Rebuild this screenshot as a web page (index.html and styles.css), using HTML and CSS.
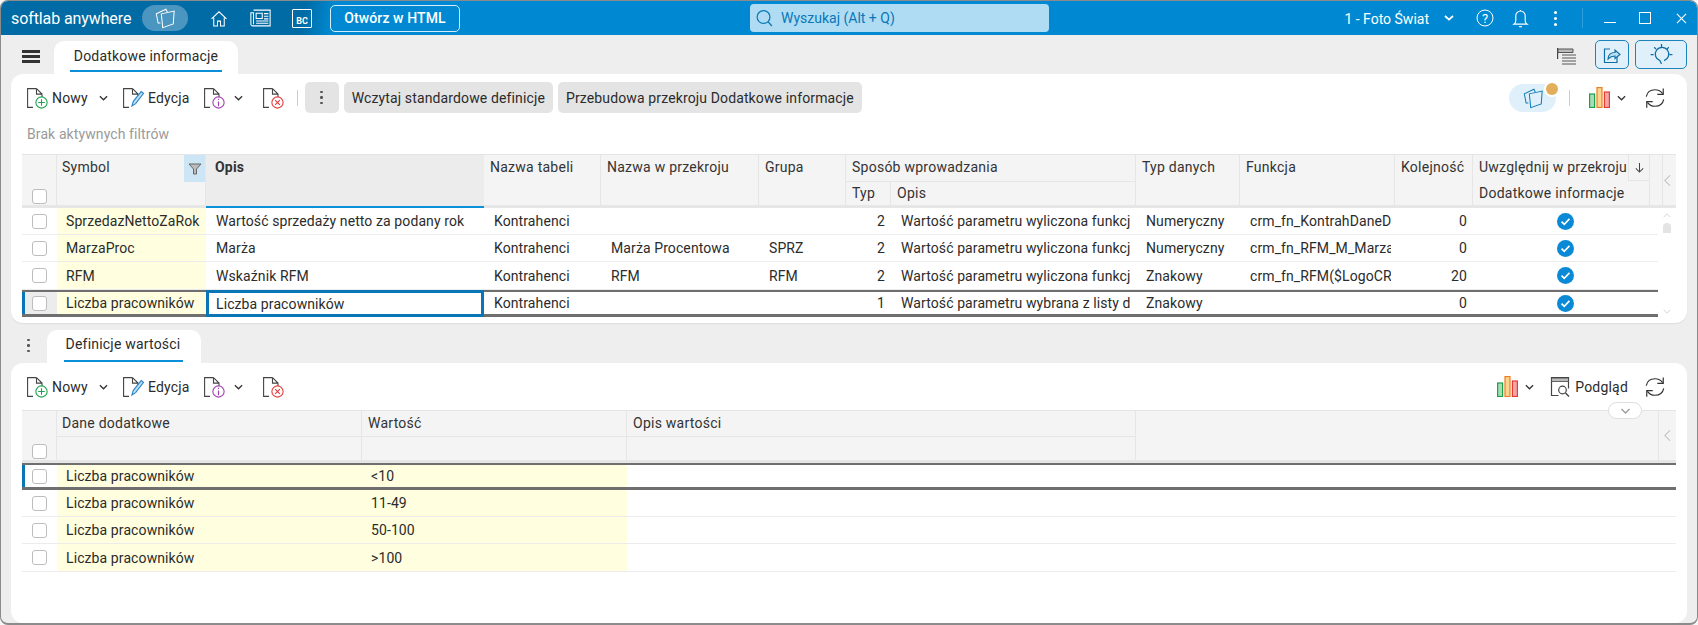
FILE: index.html
```html
<!DOCTYPE html>
<html lang="pl">
<head>
<meta charset="utf-8">
<title>softlab anywhere</title>
<link rel="stylesheet" href="styles.css">
</head>
<body>
<svg class="defs" width="0" height="0">
  <defs>
    <symbol id="page" viewBox="0 0 16 20"><path d="M9.500.6H.6v18.800h5.400M9.500.6L15 6.100v4M9.500.6v5.500H15" fill="none" stroke="#444" stroke-width="1.100"/></symbol>
    <symbol id="chev" viewBox="0 0 10 6"><path d="M1 1l4 4 4-4" fill="none" stroke="#333" stroke-width="1.400"/></symbol>
    <symbol id="views" viewBox="0 0 24 24"><path d="M7 17.500H4.500L2.500 7.500 13 2.500 14.500 5.500" fill="none" stroke="currentColor" stroke-width="1.100"/><path d="M8 7.500l14-3-1 14L9.500 22.500z" fill="none" stroke="currentColor" stroke-width="1.100"/></symbol>
    <symbol id="bars" viewBox="0 0 21 21"><rect x=".6" y="7" width="5" height="13.500" fill="#a8dcb4" stroke="#1ba04c" stroke-width="1.200"/><rect x="8" y=".6" width="5" height="19.900" fill="#fbd48e" stroke="#ef7d22" stroke-width="1.200"/><rect x="15.400" y="5" width="5" height="15.500" fill="#f6a5a5" stroke="#e63b3b" stroke-width="1.200"/></symbol>
    <symbol id="refresh" viewBox="0 0 24 24"><path d="M2.500 10.500C3.500 5.500 7.500 3 12 3c3.500 0 6.500 1.700 8.300 4.300M21.500 13.500c-1 5-5 7.500-9.500 7.500-3.500 0-6.500-1.700-8.300-4.300" fill="none" stroke="#333" stroke-width="1.300"/><path d="M21 1.500V8h-6.500M3 22.500V16h6.500" fill="none" stroke="#333" stroke-width="1.300"/></symbol>
    <symbol id="tick" viewBox="0 0 16 16"><circle cx="8" cy="8" r="8" fill="#0a8ad6"/><path d="M4.300 8.200l2.500 2.400 4.900-5" fill="none" stroke="#fff" stroke-width="1.600"/></symbol>
  </defs>
</svg>

<div class="window">
  <header class="titlebar">
    <div class="brand">
      <span class="logo">softlab anywhere</span>
      <span class="views-pill"><svg class="i22"><use href="#views"/></svg></span>
      <svg class="home" viewBox="0 0 24 24"><path d="M2 12.500L12 3l10 9.500M5 10.500V22h5v-6.500h4V22h5V10.500" fill="none" stroke="#fff" stroke-width="1.400"/></svg>
      <svg class="news" viewBox="0 0 24 20"><path d="M4 1h19v18H3a2 2 0 0 1-2-2V4h3v13" fill="none" stroke="#fff" stroke-width="1.200"/><path d="M7 4.500h7v6H7zM16 5h5M16 8h5M16 11h5M7 13.500h14M7 16h14" fill="none" stroke="#fff" stroke-width="1.200"/></svg>
      <span class="bc"><span class="bc-t">BC</span></span>
    </div>
    <button class="html-btn">Otwórz w HTML</button>
    <div class="search">
      <svg class="search-i" viewBox="0 0 18 18"><circle cx="8" cy="8" r="6.800" fill="none" stroke="#0878b8" stroke-width="1.300"/><path d="M12.800 13l4 4.500" stroke="#0878b8" stroke-width="1.300"/></svg>
      <span>Wyszukaj (Alt + Q)</span>
    </div>
    <div class="title-right">
      <span class="company">1 - Foto Świat</span>
      <svg class="company-chev" viewBox="0 0 10 6"><path d="M1 1l4 3.600L9 1" fill="none" stroke="#fff" stroke-width="1.800"/></svg>
      <svg class="help" viewBox="0 0 18 18"><circle cx="9" cy="9" r="8" fill="none" stroke="#fff" stroke-width="1"/><text x="9" y="13.500" text-anchor="middle" class="help-t">?</text></svg>
      <svg class="bell" viewBox="0 0 16 20"><path d="M1 16h14c-1.500-1-2-2-2-4V7A5 5 0 0 0 3 7v5c0 2-.5 3-2 4zM8 1v1M6.500 18.600h3" fill="none" stroke="#fff" stroke-width="1.200"/></svg>
      <span class="kebab-w"><i></i><i></i><i></i></span>
      <span class="tsep"></span>
      <span class="min"></span>
      <span class="max"></span>
      <svg class="close" viewBox="0 0 12 12"><path d="M1 1l10 10M11 1L1 11" stroke="#fff" stroke-width="1.200"/></svg>
    </div>
  </header>

  <div class="tabrow">
    <span class="burger"><i></i><i></i><i></i></span>
    <div class="tab"><span class="tab-label">Dodatkowe informacje</span></div>
    <div class="tabrow-right">
      <svg class="list-i" viewBox="0 0 19 17"><path d="M.6 0v11" stroke="#444" stroke-width="1.200"/><path d="M1 1h15v3.500H1z" fill="#bbb" stroke="#555"/><path d="M5 7h14M5 10h14M5 13h14M5 16h14" stroke="#555" stroke-width="1.200"/></svg>
      <span class="blue-btn share"><svg viewBox="0 0 18 18"><path d="M7 3H1.500v13.500h12.500V10" fill="none" stroke="#0e6fa8" stroke-width="1.200"/><path d="M5 13c.2-4 3-6.500 7-6.500V4l5 4.500-5 4V10c-3 0-5 1-7 3z" fill="#bfe0f2" stroke="#0e6fa8" stroke-width="1.100"/></svg></span>
      <span class="blue-btn bulb"><svg class="bulb-i" viewBox="0 0 24 24"><path d="M12 21l-1.500-3.100a6.500 6.500 0 1 1 4 0" fill="none" stroke="#0e6fa8" stroke-width="1.200"/><path d="M12 2v3M1.500 12h3M19.500 12h3M5 5l1.800 1.800M19 5l-1.800 1.800" stroke="#0e6fa8" stroke-width="1.200"/></svg></span>
    </div>
  </div>

  <section class="panel panel-top">
    <div class="toolbar">
      <span class="tool"><span class="doc"><svg class="doc-page"><use href="#page"/></svg><svg class="badge" viewBox="0 0 12 12"><circle cx="6" cy="6" r="5.200" fill="#fff" stroke="#1ba04c" stroke-width="1"/><path d="M6 3v6M3 6h6" stroke="#1ba04c" stroke-width="1"/></svg></span>Nowy</span>
      <svg class="chev chev-new"><use href="#chev"/></svg>
      <span class="tool tool-edit"><span class="doc"><svg class="doc-page"><use href="#page"/></svg><svg class="pen" viewBox="0 0 14 20"><path d="M1 18l1.500-5L11 2.500 13.500 4.500 5 15.500z" fill="#bfe0f2" stroke="#2a86c8" stroke-width="1.200"/></svg></span>Edycja</span>
      <span class="tool tool-info"><span class="doc"><svg class="doc-page"><use href="#page"/></svg><svg class="badge" viewBox="0 0 12 12"><circle cx="6" cy="6" r="5.200" fill="#fff" stroke="#a040b0" stroke-width="1"/><path d="M6 5v4.500M6 2.500v1.200" stroke="#a040b0" stroke-width="1.100"/></svg></span></span>
      <svg class="chev chev-info"><use href="#chev"/></svg>
      <span class="tool tool-del"><span class="doc"><svg class="doc-page"><use href="#page"/></svg><svg class="badge" viewBox="0 0 12 12"><circle cx="6" cy="6" r="5.200" fill="#fff" stroke="#e63b3b" stroke-width="1"/><path d="M3.800 3.800l4.400 4.400M8.200 3.800L3.800 8.200" stroke="#e63b3b" stroke-width="1"/></svg></span></span>
      <span class="vsep"></span>
      <span class="gbtn gbtn-dots"><span class="kebab-g"><i></i><i></i><i></i></span></span>
      <span class="gbtn">Wczytaj standardowe definicje</span>
      <span class="gbtn">Przebudowa przekroju Dodatkowe informacje</span>
      <span class="tb-right">
        <span class="views-soft"><svg class="i22"><use href="#views"/></svg><span class="dot"></span></span>
        <span class="vsep vsep-r"></span>
        <svg class="bars"><use href="#bars"/></svg>
        <svg class="chev chev-bars"><use href="#chev"/></svg>
        <svg class="refresh"><use href="#refresh"/></svg>
      </span>
    </div>
    <div class="filters">Brak aktywnych filtrów</div>

    <div class="tablewrap">
      <div class="grid grid-top">
        <div class="hc h-check"><span class="cb"></span></div>
        <div class="hc h-tall h-first">Symbol<span class="funnel"><svg viewBox="0 0 14 12"><path d="M1 1h12L8.500 6v5h-3V6z" fill="#bbb" stroke="#666"/></svg></span></div>
        <div class="hc h-opis">Opis</div>
        <div class="hc h-tall">Nazwa tabeli</div>
        <div class="hc h-tall">Nazwa w przekroju</div>
        <div class="hc h-tall">Grupa</div>
        <div class="hc h-group">Sposób wprowadzania</div>
        <div class="hc h-tall">Typ danych</div>
        <div class="hc h-tall">Funkcja</div>
        <div class="hc h-tall">Kolejność</div>
        <div class="hc h-last1">Uwzględnij w przekroju<span class="sort"><svg viewBox="0 0 12 12"><path d="M6 1v10M2 7l4 4 4-4" fill="none" stroke="#444" stroke-width="1.100"/></svg></span></div>
        <div class="hc h-tall"></div>
        <div class="hc h-sub">Typ</div>
        <div class="hc h-sub">Opis</div>
        <div class="hc h-sub">Dodatkowe informacje</div>

        <div class="c c-check"><span class="cb"></span></div><div class="c sym">SprzedazNettoZaRok</div><div class="c">Wartość sprzedaży netto za podany rok</div><div class="c">Kontrahenci</div><div class="c"></div><div class="c"></div><div class="c num">2</div><div class="c c-wide"><span class="clip">Wartość parametru wyliczona funkcją</span></div><div class="c">Numeryczny</div><div class="c"><span class="clip">crm_fn_KontrahDaneDodatkowe</span></div><div class="c num">0</div><div class="c c-tick"><svg class="tick"><use href="#tick"/></svg></div><div class="c"></div>

        <div class="c c-check"><span class="cb"></span></div><div class="c sym">MarzaProc</div><div class="c">Marża</div><div class="c">Kontrahenci</div><div class="c">Marża Procentowa</div><div class="c">SPRZ</div><div class="c num">2</div><div class="c c-wide"><span class="clip">Wartość parametru wyliczona funkcją</span></div><div class="c">Numeryczny</div><div class="c"><span class="clip">crm_fn_RFM_M_MarzaProc</span></div><div class="c num">0</div><div class="c c-tick"><svg class="tick"><use href="#tick"/></svg></div><div class="c"></div>

        <div class="c c-check"><span class="cb"></span></div><div class="c sym">RFM</div><div class="c">Wskaźnik RFM</div><div class="c">Kontrahenci</div><div class="c">RFM</div><div class="c">RFM</div><div class="c num">2</div><div class="c c-wide"><span class="clip">Wartość parametru wyliczona funkcją</span></div><div class="c">Znakowy</div><div class="c"><span class="clip">crm_fn_RFM($LogoCRM)</span></div><div class="c num">20</div><div class="c c-tick"><svg class="tick"><use href="#tick"/></svg></div><div class="c"></div>

        <div class="c c-check sel sel-first"><span class="cb"></span></div><div class="c sym sel">Liczba pracowników</div><div class="c sel focus">Liczba pracowników</div><div class="c sel">Kontrahenci</div><div class="c sel"></div><div class="c sel"></div><div class="c num sel">1</div><div class="c sel c-wide"><span class="clip">Wartość parametru wybrana z listy definicji</span></div><div class="c sel">Znakowy</div><div class="c sel"></div><div class="c num sel">0</div><div class="c c-tick sel"><svg class="tick"><use href="#tick"/></svg></div><div class="c sel"></div>
      </div>
      <aside class="gutter">
        <div class="gutter-head"><svg class="gchev" viewBox="0 0 8 14"><path d="M7 1L1 7l6 6" fill="none" stroke="#bbb" stroke-width="1.200"/></svg></div>
        <div class="scroll">
          <svg class="sarrow" viewBox="0 0 10 6"><path d="M1 5l4-4 4 4" fill="none" stroke="#ccc"/></svg>
          <span class="thumb"></span>
          <svg class="sarrow sarrow-down" viewBox="0 0 10 6"><path d="M1 1l4 4 4-4" fill="none" stroke="#ccc"/></svg>
        </div>
      </aside>
    </div>
  </section>

  <div class="tabrow2">
    <span class="kebab-d"><i></i><i></i><i></i></span>
    <div class="tab tab2"><span class="tab-label">Definicje wartości</span></div>
  </div>

  <section class="panel panel-bottom">
    <div class="toolbar toolbar2">
      <span class="tool"><span class="doc"><svg class="doc-page"><use href="#page"/></svg><svg class="badge" viewBox="0 0 12 12"><circle cx="6" cy="6" r="5.200" fill="#fff" stroke="#1ba04c" stroke-width="1"/><path d="M6 3v6M3 6h6" stroke="#1ba04c" stroke-width="1"/></svg></span>Nowy</span>
      <svg class="chev chev-new"><use href="#chev"/></svg>
      <span class="tool tool-edit"><span class="doc"><svg class="doc-page"><use href="#page"/></svg><svg class="pen" viewBox="0 0 14 20"><path d="M1 18l1.500-5L11 2.500 13.500 4.500 5 15.500z" fill="#bfe0f2" stroke="#2a86c8" stroke-width="1.200"/></svg></span>Edycja</span>
      <span class="tool tool-info"><span class="doc"><svg class="doc-page"><use href="#page"/></svg><svg class="badge" viewBox="0 0 12 12"><circle cx="6" cy="6" r="5.200" fill="#fff" stroke="#a040b0" stroke-width="1"/><path d="M6 5v4.500M6 2.500v1.200" stroke="#a040b0" stroke-width="1.100"/></svg></span></span>
      <svg class="chev chev-info"><use href="#chev"/></svg>
      <span class="tool tool-del"><span class="doc"><svg class="doc-page"><use href="#page"/></svg><svg class="badge" viewBox="0 0 12 12"><circle cx="6" cy="6" r="5.200" fill="#fff" stroke="#e63b3b" stroke-width="1"/><path d="M3.800 3.800l4.400 4.400M8.200 3.800L3.800 8.200" stroke="#e63b3b" stroke-width="1"/></svg></span></span>
      <span class="tb-right">
        <svg class="bars"><use href="#bars"/></svg>
        <svg class="chev chev-bars"><use href="#chev"/></svg>
        <span class="tool preview"><svg class="prev-i" viewBox="0 0 20 22"><path d="M8 19.500H1V1.500h17v11" fill="none" stroke="#444" stroke-width="1.200"/><path d="M1 2h17v3.500H1z" fill="#bbb" stroke="#444" stroke-width=".8"/><circle cx="12" cy="14" r="3.800" fill="none" stroke="#444" stroke-width="1.200"/><path d="M15 17l3.500 3.500" stroke="#444" stroke-width="1.400"/></svg>Podgląd</span>
        <svg class="refresh"><use href="#refresh"/></svg>
      </span>
    </div>

    <div class="tablewrap tablewrap-b">
      <div class="grid grid-bottom">
        <div class="hc h-check"><span class="cb"></span></div>
        <div class="hc h-first">Dane dodatkowe</div>
        <div class="hc">Wartość</div>
        <div class="hc">Opis wartości</div>
        <div class="hempty"></div>
        <div class="hc g-chev"><svg class="gchev" viewBox="0 0 8 14"><path d="M7 1L1 7l6 6" fill="none" stroke="#bbb" stroke-width="1.200"/></svg></div>
        <div class="hc h-sub"></div><div class="hc h-sub"></div><div class="hc h-sub"></div>

        <div class="c c-check sel sel-bar"><span class="cb"></span></div><div class="c sym sel">Liczba pracowników</div><div class="c sym sel">&lt;10</div><div class="c sel c-rest"></div>
        <div class="c c-check"><span class="cb"></span></div><div class="c sym">Liczba pracowników</div><div class="c sym">11-49</div><div class="c c-rest"></div>
        <div class="c c-check"><span class="cb"></span></div><div class="c sym">Liczba pracowników</div><div class="c sym">50-100</div><div class="c c-rest"></div>
        <div class="c c-check"><span class="cb"></span></div><div class="c sym">Liczba pracowników</div><div class="c sym">&gt;100</div><div class="c c-rest"></div>
      </div>
      <span class="collapse"><svg viewBox="0 0 10 6"><path d="M1 1l4 4 4-4" fill="none" stroke="#999" stroke-width="1.300"/></svg></span>
    </div>
  </section>
</div>
</body>
</html>
```
FILE: styles.css
```css
* { box-sizing: border-box; }
html, body { margin: 0; height: 100%; }
body { background: #f7f7f7; font-family: Roboto, "Liberation Sans", sans-serif; font-size: 14px; color: #2b2b2b; overflow: hidden; }
.defs { position: absolute; }
svg { display: block; overflow: visible; }
.i22 { width: 22px; height: 22px; }

.window { width: 1698px; height: 625px; background: #eee; border: 1px solid #8b8b8b; border-bottom-width: 2px; border-radius: 8px; overflow: hidden; display: flex; flex-direction: column; }

.titlebar { height: 34px; flex: none; display: flex; align-items: center; color: #fff; background: linear-gradient(100deg, #006ba4 0, #006ba4 300px, #0089d2 330px); }
.brand { display: flex; align-items: center; width: 329px; flex: none; }
.logo { margin-left: 10px; width: 121px; flex: none; font-size: 16px; letter-spacing: -.1px; white-space: nowrap; }
.views-pill { width: 46px; height: 26px; margin-left: 10px; border-radius: 13px; background: #4b96c0; color: #fff; display: flex; align-items: center; justify-content: center; }
.home { width: 18px; height: 19px; margin-left: 22px; flex: none; }
.news { width: 21px; height: 18px; margin-left: 22px; flex: none; }
.bc { width: 20px; height: 19px; margin-left: 21px; border: 1px solid #fff; border-radius: 1px; display: flex; align-items: flex-end; justify-content: center; }
.bc-t { font-size: 9px; font-weight: 700; line-height: 12px; }
.html-btn { width: 130px; height: 27px; flex: none; border: 1px solid #d6eefb; border-radius: 5px; background: transparent; color: #fff; font: 500 14px Roboto, sans-serif; letter-spacing: .1px; padding: 0; }
.search { margin-left: 290px; width: 299px; height: 28px; flex: none; border-radius: 4px; background: #b0dcf3; color: #0878b8; display: flex; align-items: center; padding-left: 6px; gap: 8px; }
.search-i { width: 17px; height: 18px; }
.title-right { margin-left: auto; display: flex; align-items: center; height: 100%; }
.company { position: relative; top: 1px; white-space: nowrap; }
.company-chev { width: 10px; height: 6px; margin-left: 15px; }
.help { width: 18px; height: 18px; margin-left: 22px; }
.help-t { fill: #fff; font-size: 13px; font-family: Roboto, sans-serif; }
.bell { width: 15px; height: 19px; margin-left: 19px; }
.kebab-w, .kebab-g, .kebab-d { display: flex; flex-direction: column; }
.kebab-w { gap: 3px; margin-left: 26px; }
.kebab-w i { width: 3px; height: 3px; background: #fff; border-radius: 50%; }
.tsep { width: 1px; height: 20px; background: #2ba0dd; margin-left: 25px; }
.min { width: 12px; height: 1px; background: #fff; margin-left: 21px; position: relative; top: 4px; }
.max { width: 12px; height: 12px; border: 1px solid #fff; margin-left: 23px; }
.close { width: 11px; height: 11px; margin: 0 10px 0 25px; }

.tabrow { height: 39px; flex: none; display: flex; align-items: flex-end; }
.burger { display: flex; flex-direction: column; gap: 2px; margin: 0 0 11px 21px; }
.burger i { display: block; width: 18px; height: 3px; background: #333; }
.tab { background: #fff; border-radius: 10px 10px 0 0; height: 33px; margin-left: 14px; width: 184px; padding: 0 16px 2px; display: flex; }
.tab-label { width: 100%; padding-top: 7px; text-align: center; border-bottom: 2px solid #0b8fd8; letter-spacing: .2px; white-space: nowrap; color: #2b2b2b; }
.tabrow-right { margin-left: auto; display: flex; align-items: flex-start; height: 100%; padding-top: 5px; }
.list-i { width: 19px; height: 17px; margin: 8px 19px 0 0; }
.blue-btn { height: 29px; border: 1px solid #1c83bb; border-radius: 5px; background: #dff0fa; display: flex; align-items: center; justify-content: center; }
.share { width: 34px; margin-right: 6px; }
.share svg { width: 18px; height: 18px; }
.bulb { width: 52px; margin-right: 10px; }
.bulb-i { width: 25px; height: 25px; }

.panel { background: #fff; margin-left: 10px; border-radius: 12px; flex: none; width: 1676px; }
.panel-top { height: 249px; box-shadow: 0 1px 1px #ddd; padding-top: 8px; }
.panel-bottom { height: 260px; padding-top: 8px; }

.toolbar { height: 31px; display: flex; align-items: center; padding-left: 16px; }
.tool { display: inline-flex; align-items: center; gap: 5px; letter-spacing: .2px; white-space: nowrap; }
.doc { position: relative; width: 20px; height: 20px; display: block; flex: none; }
.doc-page { width: 16px; height: 20px; }
.badge { position: absolute; right: -1px; bottom: -1px; width: 13px; height: 13px; }
.pen { position: absolute; right: -1px; bottom: 0; width: 13px; height: 19px; }
.chev { width: 9px; height: 6px; flex: none; }
.chev-new { margin-left: 11px; }
.tool-edit { margin-left: 15px; }
.tool-info { margin-left: 14px; }
.chev-info { margin-left: 10px; }
.tool-del { margin-left: 20px; }
.vsep { width: 1px; height: 16px; background: #ccc; margin-left: 14px; flex: none; }
.gbtn { height: 31px; padding: 0 8px; background: #e4e4e4; border-radius: 5px; display: flex; align-items: center; margin-left: 5px; letter-spacing: .13px; white-space: nowrap; }
.gbtn-dots { width: 34px; margin-left: 7px; justify-content: center; padding: 0; }
.kebab-g { gap: 3px; }
.kebab-g i, .kebab-d i { width: 2.5px; height: 2.5px; background: #555; border-radius: 50%; }
.tb-right { margin-left: auto; display: flex; align-items: center; padding-right: 21px; }
.views-soft { width: 47px; height: 28px; border-radius: 14px; background: #e0f0fa; color: #0e7ab5; position: relative; display: flex; align-items: center; justify-content: center; }
.dot { position: absolute; right: -2px; top: -1px; width: 12px; height: 12px; border-radius: 50%; background: #e3ae5a; box-shadow: 0 0 0 2px #fff; }
.vsep-r { margin-left: 13px; margin-right: 19px; }
.bars { width: 21px; height: 21px; }
.chev-bars { margin-left: 7px; }
.refresh { width: 22px; height: 22px; margin-left: 18px; }
.preview { margin-left: 16px; gap: 4px; margin-right: -2px; }
.prev-i { width: 21px; height: 22px; }

.filters { margin: 11px 0 0 16px; height: 20px; color: #9a9a9a; letter-spacing: .1px; line-height: 20px; }

.tablewrap { display: flex; margin: 10px 0 0 11px; position: relative; width: 1654px; }
.tablewrap-b { margin-top: 8px; }
.grid { display: grid; flex: none; border-top: 1px solid #e4e4e4; }
.grid-top { grid-template-columns: 35px 149px 278px 117px 158px 87px 45px 245px 104px 155px 78px 177px 8px; grid-template-rows: 27px 26px 27px 27px 28px 27px; }
.grid-bottom { width: 1654px; grid-template-columns: 35px 305px 265px 509px 522px 18px; grid-template-rows: 26px 26px 27px 27px 27px 28px; }
.hc { background: #f4f4f4; border-right: 1px solid #e6e6e6; border-bottom: 1px solid #e6e6e6; padding: 4px 6px; position: relative; letter-spacing: .25px; white-space: nowrap; line-height: 17px; color: #333; }
.h-first { padding-left: 5px; }
.h-check { grid-row: span 2; display: flex; align-items: flex-end; justify-content: center; padding: 0 0 1px; border-bottom: 3px solid #e6e6e6; }
.h-tall { grid-row: span 2; border-bottom: 3px solid #e6e6e6; }
.h-sub { border-bottom: 3px solid #e6e6e6; padding-top: 3px; }
.h-opis { grid-row: span 2; background: #ececec; font-weight: 700; letter-spacing: .2px; padding-left: 9px; border-bottom: 2px solid #0b8fd8; border-right: 0; }
.h-group { grid-column: span 2; }
.h-last1 { border-bottom: 0; padding-right: 0; }
.funnel { position: absolute; right: 0; top: 0; width: 21px; height: 27px; background: #cce6f6; display: flex; align-items: center; justify-content: center; }
.funnel svg { width: 14px; height: 12px; }
.sort { position: absolute; right: 0; top: 0; width: 21px; height: 26px; border-left: 1px solid #e6e6e6; border-bottom: 1px solid #e6e6e6; background: #f4f4f4; display: flex; align-items: center; justify-content: center; }
.sort svg { width: 11px; height: 11px; }
.hempty { grid-row: span 2; background: #f4f4f4; border-bottom: 3px solid #e6e6e6; }
.g-chev { grid-row: span 2; border-right: 0; border-left: 1px solid #e6e6e6; border-bottom: 3px solid #e6e6e6; display: flex; align-items: center; justify-content: center; padding: 0; }

.cb { display: block; width: 15px; height: 15px; border: 1px solid #bdbdbd; border-radius: 3px; background: #fff; }
.c { border-bottom: 1px solid #ececec; padding: 0 4px 0 10px; display: flex; align-items: center; white-space: nowrap; overflow: hidden; letter-spacing: .1px; min-width: 0; background: #fff; }
.clip { display: block; overflow: hidden; min-width: 0; }
.c-wide { padding-right: 6px; }
.c-check { justify-content: center; padding: 0; }
.sym { background: #ffffe0; padding: 0 0 0 9px; }
.num { justify-content: flex-end; padding-right: 6px; }
.c-tick { justify-content: center; padding: 0 1px 0 8px; }
.c-rest { grid-column: span 3; }
.tick { width: 17px; height: 17px; flex: none; }
.sel { border-top: 2px solid #6f6f6f; border-bottom: 3px solid #6f6f6f; }
.sel-first { background: #ececec; box-shadow: inset 3px 0 0 #0a76b5; }
.sel-bar { box-shadow: inset 3px 0 0 #0a76b5; }
.c.focus { border: 3px solid #0a76b5; padding-left: 7px; }

.gutter { width: 18px; flex: none; background: #fff; }
.gutter-head { background: #f4f4f4; border-top: 1px solid #e4e4e4; border-left: 1px solid #e6e6e6; border-bottom: 3px solid #e6e6e6; height: 54px; display: flex; align-items: center; justify-content: center; }
.gchev { width: 7px; height: 13px; }
.scroll { height: 109px; display: flex; flex-direction: column; align-items: center; padding-top: 5px; }
.sarrow { width: 10px; height: 5px; }
.thumb { width: 8px; height: 10px; margin-top: 5px; background: #e4e4e4; border-radius: 4px 4px 0 0; }
.sarrow-down { margin-top: auto; margin-bottom: 3px; }

.tabrow2 { height: 40px; flex: none; display: flex; align-items: flex-end; }
.kebab-d { gap: 3px; margin: 0 0 11px 26px; }
.tab.tab2 { margin-left: 17px; width: 154px; padding: 0 18px 1px 17px; }
.tab2 .tab-label { padding-top: 6px; }
.collapse { position: absolute; right: 34px; top: -8px; width: 34px; height: 17px; border: 1px solid #ddd; border-radius: 9px; background: #fff; display: flex; align-items: center; justify-content: center; }
.collapse svg { width: 11px; height: 6px; }
```
